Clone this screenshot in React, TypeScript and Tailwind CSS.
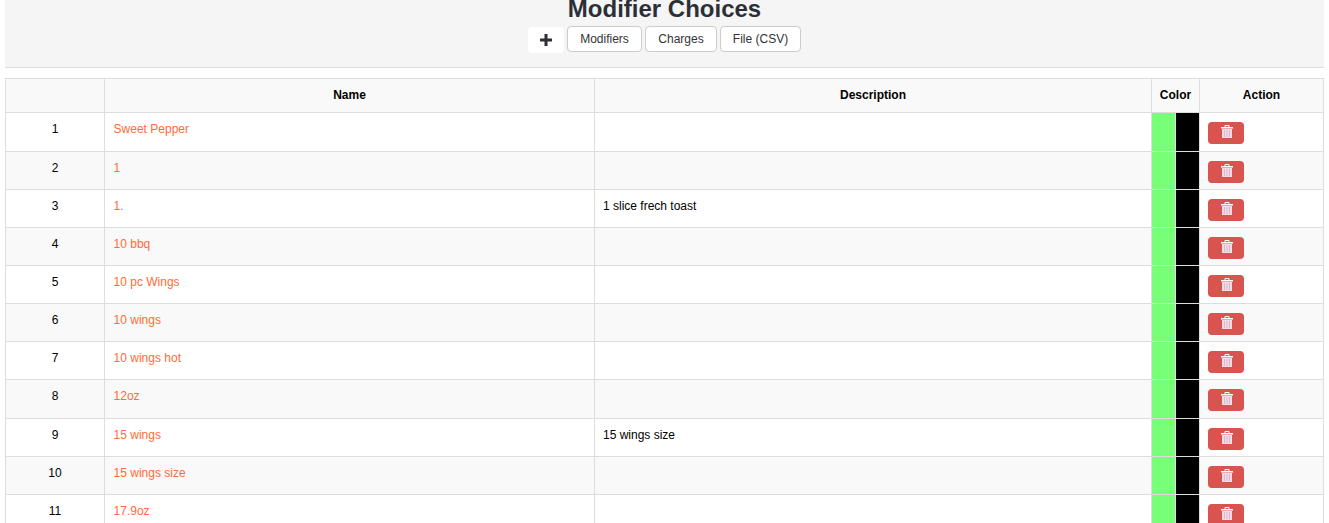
const font = { fontFamily: '"Liberation Sans", Arial, sans-serif' };

type Choice = { id: number; name: string; description?: string };

const choices: Choice[] = [
  { id: 1, name: 'Sweet Pepper' },
  { id: 2, name: '1' },
  { id: 3, name: '1.', description: '1 slice frech toast' },
  { id: 4, name: '10 bbq' },
  { id: 5, name: '10 pc Wings' },
  { id: 6, name: '10 wings' },
  { id: 7, name: '10 wings hot' },
  { id: 8, name: '12oz' },
  { id: 9, name: '15 wings', description: '15 wings size' },
  { id: 10, name: '15 wings size' },
  { id: 11, name: '17.9oz' },
];

function TrashIcon() {
  return (
    <svg width="12" height="13" viewBox="0 0 12 13" className="mb-[3px] ml-[2px] block">
      <path d="M4 2V.5h4V2" fill="none" stroke="#fff" strokeWidth="1" />
      <rect x="0" y="2" width="12" height="1.5" fill="#fff" />
      <rect x="1" y="4" width="10" height="9" fill="#f4dce4" />
      <path d="M3.5 5v7M6 5v7M8.5 5v7" stroke="#e0b4d4" strokeWidth="1" />
    </svg>
  );
}

export default function App() {
  return (
    <div className="h-[523px] overflow-hidden bg-white px-[5px] text-[12px] text-black" style={font}>
      <div className="flex h-[68px] flex-col items-center justify-end overflow-hidden border-b border-[#ddd] bg-[#f5f5f5] pb-[14px]">
        <h1 className="mb-[4px] text-[24px] leading-[26px] font-bold text-[#2d2f36]">Modifier Choices</h1>
        <div className="flex items-start gap-[3px]">
          <button className="mt-[1px] flex h-[26px] w-[36px] items-center justify-center rounded-[4px] bg-white text-[#2d2f36]">
            <svg width="12" height="12" viewBox="0 0 12 12">
              <path d="M4.5 0h3v4.5H12v3H7.5V12h-3V7.5H0v-3h4.5z" fill="currentColor" />
            </svg>
          </button>
          <button className="h-[26px] w-[75px] rounded-[4px] border border-[#ccc] bg-white text-[12px] text-[#333]">Modifiers</button>
          <button className="h-[26px] w-[72px] rounded-[4px] border border-[#ccc] bg-white text-[12px] text-[#333]">Charges</button>
          <button className="h-[26px] w-[81px] rounded-[4px] border border-[#ccc] bg-white text-[12px] text-[#333]">File (CSV)</button>
        </div>
      </div>

      <table className="mt-[10px] w-[1319px] table-fixed border-collapse">
        <colgroup>
          <col className="w-[99px]" />
          <col className="w-[490px]" />
          <col className="w-[557px]" />
          <col className="w-[24px]" />
          <col className="w-[24px]" />
          <col />
        </colgroup>
        <thead>
          <tr className="h-[34.45px] bg-[#f9f9f9]">
            <th className="border border-[#ddd]" />
            <th className="border border-[#ddd] pb-[2px] font-bold">Name</th>
            <th className="border border-[#ddd] pb-[2px] font-bold">Description</th>
            <th colSpan={2} className="border border-[#ddd] pb-[2px] font-bold">Color</th>
            <th className="border border-[#ddd] pb-[2px] font-bold">Action</th>
          </tr>
        </thead>
        <tbody>
          {choices.map((c) => (
            <tr key={c.id} className={c.id % 2 === 0 ? 'bg-[#f9f9f9]' : 'bg-white'}>
              <td className="h-[38.15px] border border-[#ddd] p-2 text-center align-top leading-[17px]">{c.id}</td>
              <td className="border border-[#ddd] p-2 pl-[8.6px] align-top leading-[17px] text-[#ff6b35]">{c.name}</td>
              <td className="border border-[#ddd] p-2 align-top leading-[17px]">{c.description}</td>
              <td className="border border-[#ddd] bg-[#77ff77]" />
              <td className="border border-[#ddd] bg-black" />
              <td className="border border-[#ddd] px-2 align-top">
                <button className="mt-[9px] flex h-[22px] w-[36px] items-center justify-center rounded-[4px] bg-[#d9534f]">
                  <TrashIcon />
                </button>
              </td>
            </tr>
          ))}
        </tbody>
      </table>
    </div>
  );
}
